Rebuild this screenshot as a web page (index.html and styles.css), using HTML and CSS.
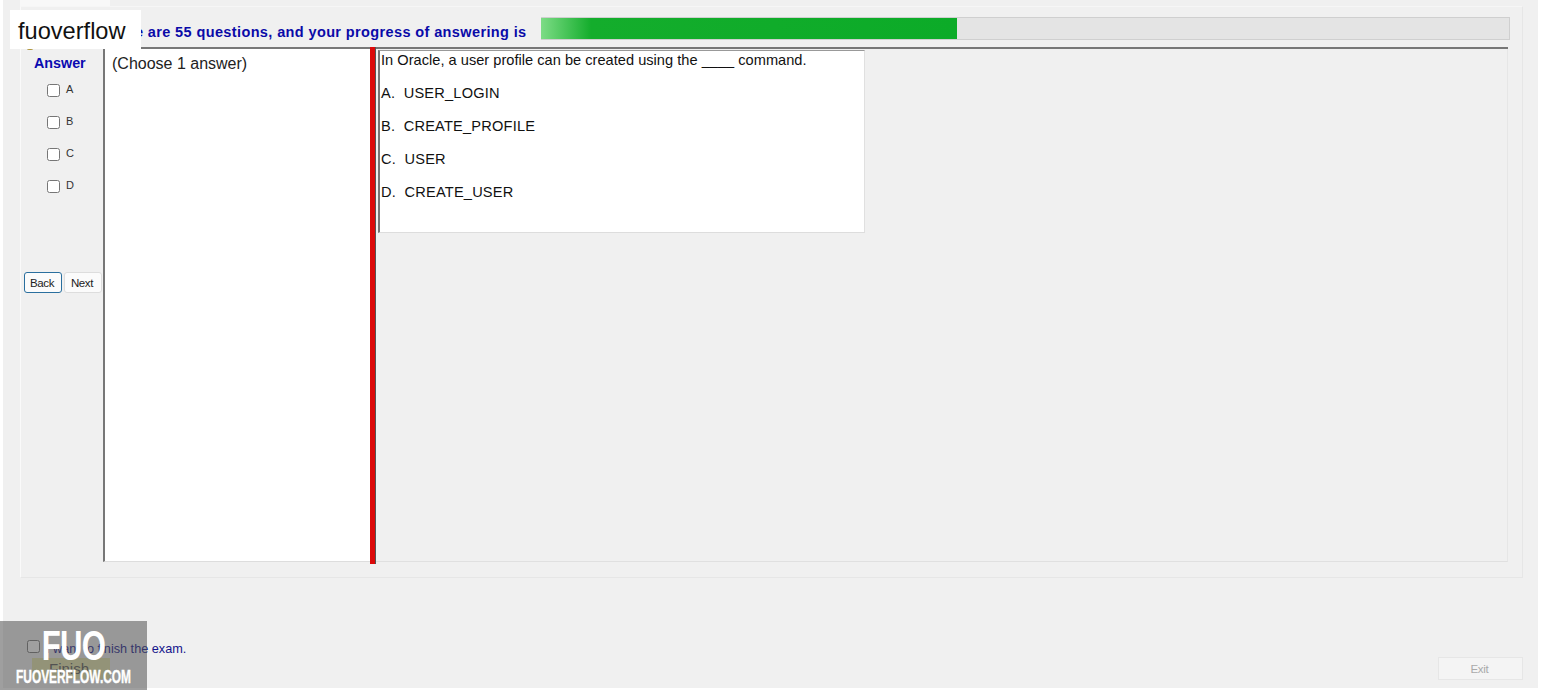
FILE: index.html
```html
<!DOCTYPE html>
<html>
<head>
    <title>Exam</title>
    <meta charset="utf-8"/>
    <link rel="stylesheet" href="styles.css">
</head>
<body>
<div class="exam_window">
    <div class="exam_tab"></div>
    <div class="exam_group">
        <div class="exam_top">
            <div class="exam_progress_text">There are 55 questions, and your progress of answering is</div>
            <div class="exam_progress"><div class="exam_progress_bar"></div></div>
        </div>
        <div class="exam_main">
            <div class="answer_col">
                <div class="answer_title">Answer</div>
                <label class="answer_item"><input type="checkbox"/><span>A</span></label>
                <label class="answer_item"><input type="checkbox"/><span>B</span></label>
                <label class="answer_item"><input type="checkbox"/><span>C</span></label>
                <label class="answer_item"><input type="checkbox"/><span>D</span></label>
                <div class="answer_nav">
                    <button class="btn btn_active">Back</button>
                    <button class="btn">Next</button>
                </div>
            </div>
            <div class="choose_pane">(Choose 1 answer)</div>
            <div class="split_bar"></div>
            <div class="question_pane">
                <div class="question_box">
                    <div class="question_line question_first">In Oracle, a user profile can be created using the ____ command.</div>
                    <div class="question_line question_option">A.&nbsp; USER_LOGIN</div>
                    <div class="question_line question_option">B.&nbsp; CREATE_PROFILE</div>
                    <div class="question_line question_option">C.&nbsp; USER</div>
                    <div class="question_line question_option">D.&nbsp; CREATE_USER</div>
                </div>
            </div>
        </div>
    </div>
    <div class="exam_bottom">
        <div class="finish_col">
            <label class="finish_check"><input type="checkbox"/><span>I want to finish the exam.</span></label>
            <button class="btn_finish">Finish</button>
        </div>
        <button class="btn_exit">Exit</button>
    </div>
</div>
<div class="brand_peek"></div>
<div class="brand_label">fuoverflow</div>
<div class="brand_mark">
    <div class="brand_logo">FUO</div>
    <div class="brand_site">FUOVERFLOW.COM</div>
</div>
</body>
</html>
```

FILE: styles.css
```css
*{margin:0;padding:0;box-sizing:border-box;}
html,body{height:690px;overflow:hidden;background:#fff;}
body{font-family:"Liberation Sans",Arial,sans-serif;color:#111;position:relative;}
.exam_window{
    width:1535px;
    height:688px;
    margin-left:3px;
    padding:5px 15px 0 17px;
    background:#f0f0f0;
    position:relative;
}
.exam_tab{
    height:6px;
    width:90px;
    margin-top:-5px;
    background:#f8f8f8;
}
.exam_group{
    height:572px;
    padding:10px 12px 0 2px;
    border:1px solid #e6e6e6;
    border-left:1px solid #fafafa;
    border-top-color:#f6f6f6;
}
.exam_top{
    display:flex;
    align-items:center;
    height:23px;
    padding-left:79px;
}
.exam_progress_text{
    width:439px;
    margin-top:7px;
    font-size:14.5px;
    letter-spacing:.38px;
    font-weight:bold;
    color:#0a0aa8;
    white-space:nowrap;
}
.exam_progress{
    flex:1;
    height:23px;
    background:#e4e4e4;
    border:1px solid #cfcfcf;
    border-left:none;
}
.exam_progress_bar{
    width:416px;
    height:21px;
    background:linear-gradient(90deg,#7ddc86 0,#14ad2c 50px,#0cab28 100%);
}
.exam_main{
    display:flex;
    height:515px;
    margin:7px 2px 0 0;
    border-top:2px solid #777;
}
.answer_col{
    width:79px;
    margin-top:-2px;
    padding-top:2px;
    background:#f0f0f0;
    position:relative;
}
.answer_title{
    margin:6px 0 0 11px;
    height:19px;
    font-size:14.3px;
    font-weight:bold;
    color:#0a0ab0;
}
.answer_item{
    display:flex;
    align-items:center;
    gap:6px;
    height:32px;
    padding-left:24px;
    font-size:11px;
    color:#333;
}
.answer_item span{margin-top:-2px;}
.answer_item input{width:13px;height:13px;}
.answer_nav{
    display:flex;
    gap:2px;
    margin:70px 0 0 1px;
}
.btn{
    width:38px;
    height:21px;
    padding-right:2px;
    font-family:inherit;
    font-size:11.5px;
    letter-spacing:-.4px;
    color:#222;
    background:#fbfbfb;
    border:1px solid #ddd;
    border-radius:3px;
}
.btn_active{border:1px solid #2a6f9e;}
.choose_pane{
    width:267px;
    margin-left:1px;
    padding:6px 0 0 7px;
    background:#fff;
    border-left:2px solid #777;
    border-bottom:1px solid #ddd;
    font-size:16px;
    color:#222;
}
.split_bar{
    width:6px;
    height:517px;
    margin-top:-2px;
    background:#dc0a0a;
    border-right:1px solid #555;
}
.question_pane{
    flex:1;
    padding:1px 0 0 2px;
    border-right:1px solid #e6e6e6;
    border-bottom:1px solid #e0e0e0;
}
.question_box{
    width:487px;
    height:183px;
    padding:1px 0 0 1px;
    background:#fff;
    border-left:2px solid #777;
    border-top:1px solid #999;
    border-bottom:1px solid #ddd;
    border-right:1px solid #e0e0e0;
    font-size:14.6px;
    color:#111;
}
.question_line{margin-top:16px;height:17px;line-height:17px;white-space:nowrap;}
.question_first{margin-top:0;letter-spacing:.02px;}
.question_option{letter-spacing:.2px;}
.exam_bottom{
    display:flex;
    justify-content:space-between;
    align-items:flex-end;
    margin-top:64px;
    padding-left:7px;
}
.finish_col{width:200px;}
.finish_check{display:flex;align-items:center;gap:6px;font-size:12.7px;color:#14148c;}
.finish_check input{width:13px;height:13px;align-self:flex-start;margin-top:-2px;}
.btn_finish{
    display:block;
    width:78px;
    height:21px;
    margin:2px 0 0 5px;
    padding-right:4px;
    border:none;
    background:#e4e4a8;
    font-family:inherit;
    font-size:15px;
    color:#555;
}
.btn_exit{
    width:85px;
    height:23px;
    margin-bottom:-1px;
    padding-right:2px;
    background:#f4f4f4;
    border:1px solid #e6e6e6;
    font-family:inherit;
    font-size:11.5px;
    letter-spacing:-.3px;
    color:#aaa;
}
/* overlays burned into the screenshot */
.brand_peek{
    position:absolute;
    left:24px;
    top:38px;
    width:12px;
    height:12px;
    border-radius:50%;
    background:#2a2410;
    border-bottom:1px solid #b89a30;
}
.brand_label{
    position:absolute;
    left:10px;
    top:10px;
    width:131px;
    height:39px;
    padding-left:8px;
    background:#fff;
    font-size:23.6px;
    line-height:43px;
    color:#111;
}
.brand_mark{
    position:absolute;
    left:0;
    top:621px;
    width:147px;
    height:69px;
    background:rgba(80,80,80,.55);
    color:#fff;
    font-weight:bold;
    text-align:center;
}
.brand_logo{
    font-size:42px;
    line-height:40px;
    margin-top:5px;
    letter-spacing:-1px;
    transform:scaleX(.74);
}
.brand_site{
    width:175px;
    margin:1px 0 0 -14px;
    font-size:18px;
    line-height:20px;
    transform:scaleX(.66);
    white-space:nowrap;
    -webkit-text-stroke:.4px #fff;
}
```
